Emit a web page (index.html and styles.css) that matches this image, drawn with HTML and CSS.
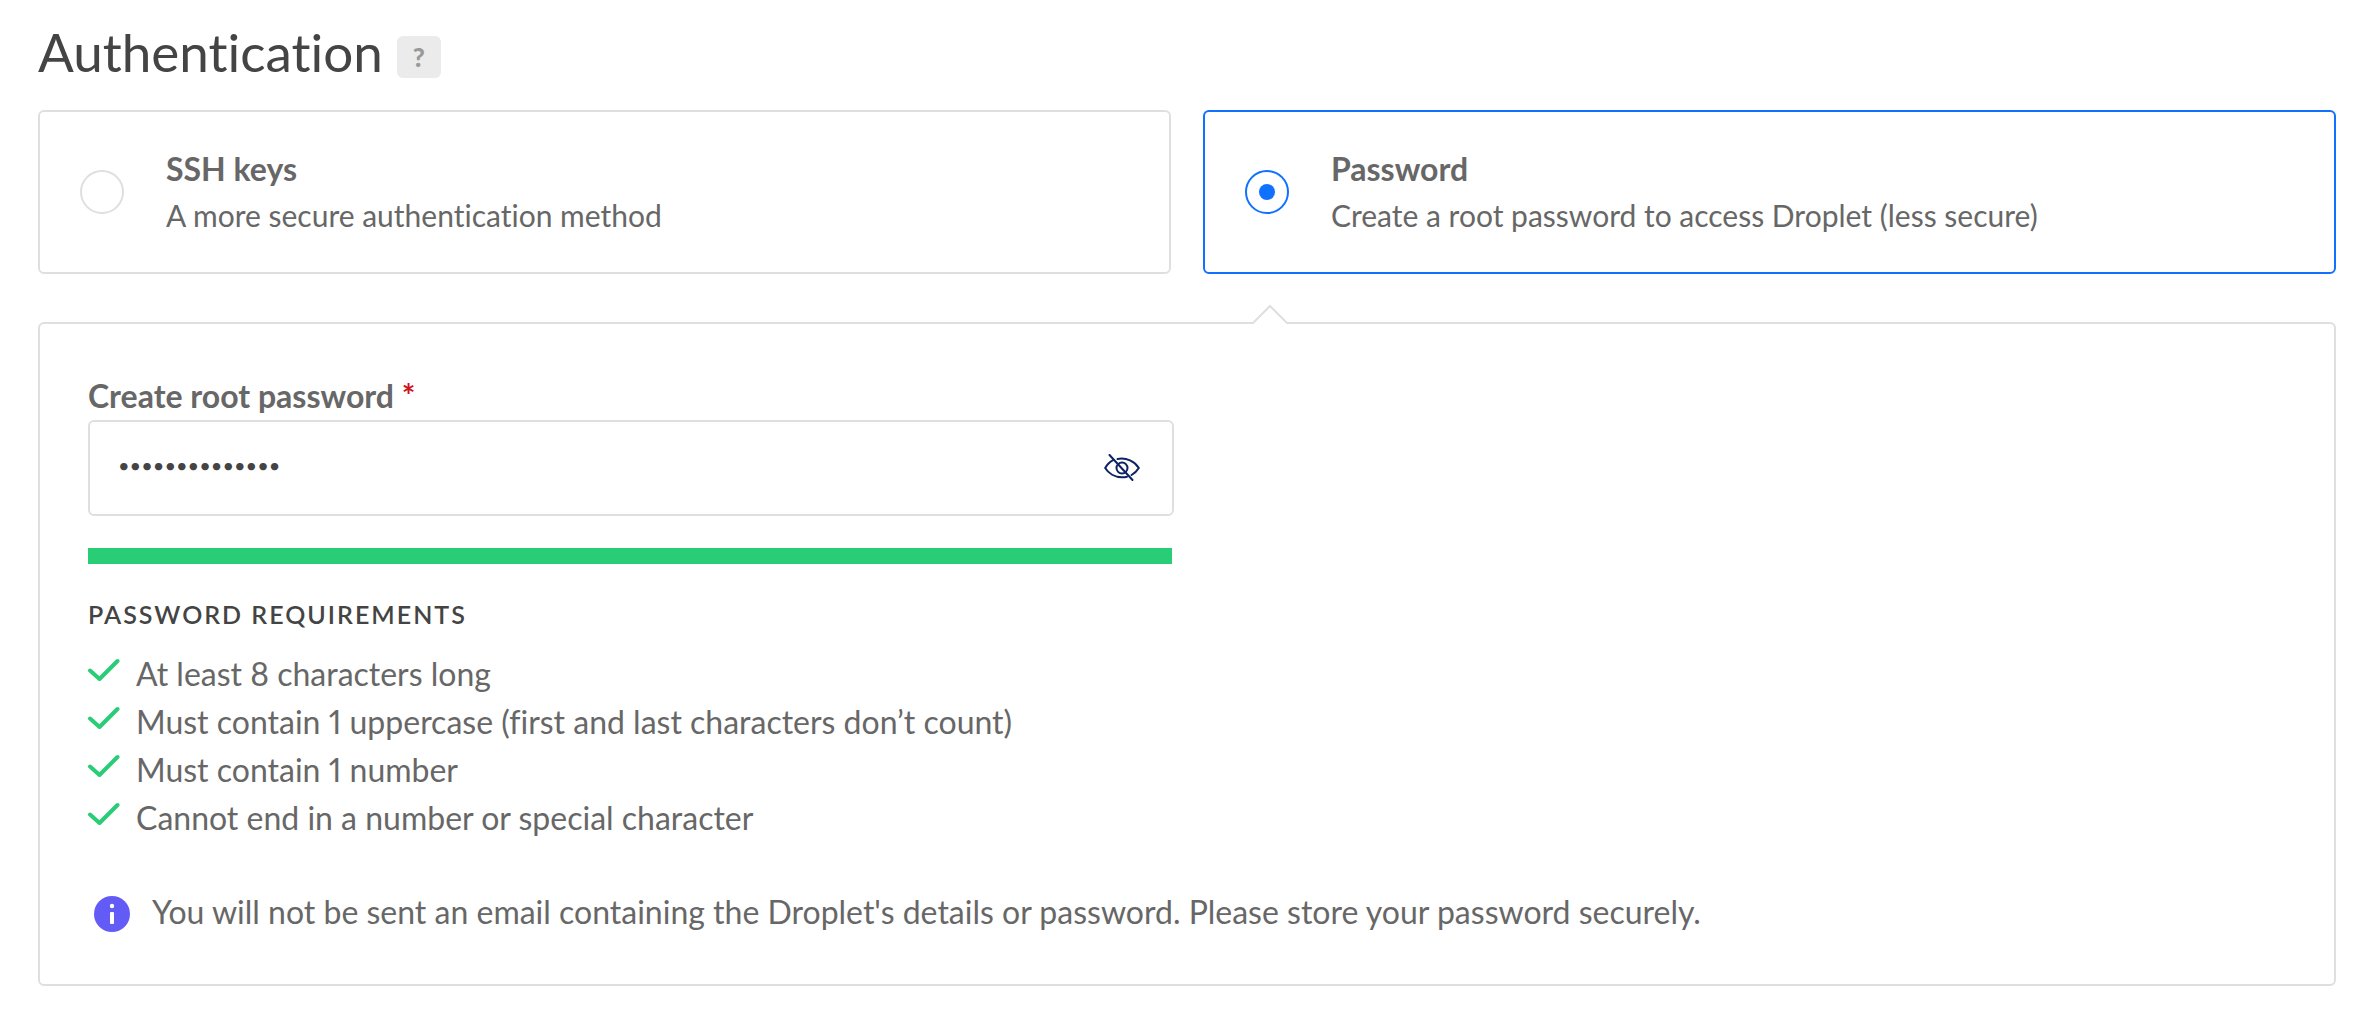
FILE: index.html
```html
<!DOCTYPE html>
<html lang="en">
<head>
<meta charset="utf-8">
<title>Authentication</title>
<link rel="stylesheet" href="styles.css">
</head>
<body>
<main class="auth">
  <header class="auth-header">
    <h1 class="auth-title">Authentication</h1>
    <button class="help" type="button">?</button>
  </header>

  <form class="auth-form">
    <div class="methods">
      <label class="method">
        <input class="radio" type="radio" name="method">
        <span class="method-text">
          <span class="method-name">SSH keys</span>
          <span class="method-note">A more secure authentication method</span>
        </span>
      </label>
      <label class="method">
        <input class="radio" type="radio" name="method" checked>
        <span class="method-text">
          <span class="method-name">Password</span>
          <span class="method-note">Create a root password to access Droplet (less secure)</span>
        </span>
      </label>
    </div>

    <section class="panel">
      <svg class="panel-caret" viewBox="0 0 36 20" aria-hidden="true"><path d="M0 20L18 1.500L36 20Z" fill="#fff"/><path d="M0 19H1L18 2L35 19H36" fill="none" stroke="#dfdfdf" stroke-width="2"/></svg>
      <div class="field">
        <label class="field-label" for="root-password">Create root password <span class="required">*</span></label>
        <div class="field-box">
          <input class="field-input" id="root-password" type="password" value="Tr4il-Harbor9x">
          <button class="reveal" type="button" aria-label="Show password">
            <svg class="reveal-icon" viewBox="0 0 36 28" fill="none" stroke="#0c2461" stroke-width="2" stroke-linecap="round" aria-hidden="true">
              <path d="M5.500 1L28.500 26"/>
              <path d="M9.500 5.800C6 7.700 2.800 10.800 1.200 14C4.500 19.500 11 23.300 18 23.300C19.800 23.300 21.500 23.100 23 22.700"/>
              <path d="M13.500 5C22.500 3.300 30.800 7.500 34.800 14C33 17 30.500 19.300 27.500 21"/>
              <circle cx="18" cy="14" r="5.500"/>
            </svg>
          </button>
        </div>
        <div class="strength"></div>
      </div>

      <h2 class="rules-title">PASSWORD REQUIREMENTS</h2>
      <ul class="rules">
        <li class="rule"><svg class="check" viewBox="0 0 32 24" aria-hidden="true"><path d="M2 12.500L11.500 21L29.500 3"/></svg>At least 8 characters long</li>
        <li class="rule"><svg class="check" viewBox="0 0 32 24" aria-hidden="true"><path d="M2 12.500L11.500 21L29.500 3"/></svg>Must contain 1 uppercase (first and last characters don’t count)</li>
        <li class="rule"><svg class="check" viewBox="0 0 32 24" aria-hidden="true"><path d="M2 12.500L11.500 21L29.500 3"/></svg>Must contain 1 number</li>
        <li class="rule"><svg class="check" viewBox="0 0 32 24" aria-hidden="true"><path d="M2 12.500L11.500 21L29.500 3"/></svg>Cannot end in a number or special character</li>
      </ul>

      <p class="notice">
        <svg class="notice-icon" viewBox="0 0 36 36" aria-hidden="true"><circle cx="18" cy="18" r="18" fill="#635bf5"/><circle cx="18" cy="10" r="2.200" fill="#fff"/><rect x="16" y="16" width="4" height="12" rx="1" fill="#fff"/></svg>
        <span>You will not be sent an email containing the Droplet's details or password. Please store your password securely.</span>
      </p>
    </section>
  </form>
</main>
</body>
</html>
```
FILE: styles.css
```css
* {
  box-sizing: border-box;
}

body {
  margin: 0;
  background: #fff;
  color: #676767;
  font-family: Lato, "Open Sans", sans-serif;
  font-size: 32px;
  font-variant-ligatures: none;
  font-variant-numeric: proportional-nums;
  line-height: 48px;
}

.auth {
  padding: 20px 30px 48px 38px;
}

.auth-header {
  display: flex;
  align-items: center;
  gap: 14px;
  margin-bottom: 26px;
}

.auth-title {
  margin: 0;
  color: #444;
  font-size: 53px;
  font-weight: 400;
  line-height: 64px;
}

.help {
  width: 44px;
  height: 42px;
  margin-top: 10px;
  padding: 0;
  border: 0;
  border-radius: 6px;
  background: #ebebeb;
  color: #999;
  font: 900 26px/42px Lato, sans-serif;
}

.methods {
  display: grid;
  grid-template-columns: 1fr 1fr;
  gap: 32px;
  margin-bottom: 48px;
}

.method {
  display: flex;
  align-items: center;
  gap: 42px;
  padding: 34px 40px;
  border: 2px solid #dfdfdf;
  border-radius: 6px;
}

.method:has(:checked) {
  border-color: #1070ff;
}

.radio {
  appearance: none;
  display: grid;
  place-items: center;
  flex: none;
  width: 44px;
  height: 44px;
  margin: 0;
  border: 2px solid #dfdfdf;
  border-radius: 50%;
}

.radio:checked {
  border-color: #1070ff;
}

.radio:checked::before {
  content: "";
  width: 16px;
  height: 16px;
  border-radius: 50%;
  background: #1070ff;
}

.method-text {
  display: grid;
  line-height: 46px;
}

.method-name {
  font-size: 32px;
  font-weight: 700;
}

.method-note {
  font-size: 30px;
}

.panel {
  position: relative;
  padding: 48px;
  border: 2px solid #dfdfdf;
  border-radius: 6px;
}

.panel-caret {
  position: absolute;
  top: -20px;
  left: calc(50% + 65px);
  width: 36px;
  height: 20px;
}

.field {
  width: calc(50% - 13px);
}

.field-label {
  display: block;
  font-weight: 700;
}

.required {
  color: #d0121b;
}

.field-box {
  display: flex;
  align-items: center;
  height: 96px;
  padding: 0 32px 0 28px;
  border: 2px solid #dfdfdf;
  border-radius: 6px;
}

.field-input {
  flex: 1;
  min-width: 0;
  padding: 0 0 6px;
  border: 0;
  outline: 0;
  background: none;
  color: #444;
  font: 400 20px/48px Lato, sans-serif;
}

.reveal {
  display: flex;
  padding: 0;
  border: 0;
  background: none;
}

.reveal-icon {
  width: 36px;
  height: 28px;
}

.strength {
  height: 16px;
  margin: 32px 2px 0 0;
  background: #28cd75;
}

.rules-title {
  margin: 32px 0 18px;
  color: #444;
  font-size: 25px;
  font-weight: 600;
  letter-spacing: 2px;
  line-height: 36px;
}

.rules {
  margin: 0 0 46px;
  padding: 0;
  list-style: none;
}

.rule {
  display: flex;
  gap: 16px;
}

.check {
  width: 32px;
  height: 24px;
  margin-top: 8px;
  fill: none;
  stroke: #28cd75;
  stroke-width: 4;
  stroke-linecap: round;
  stroke-linejoin: round;
}

.notice {
  display: flex;
  gap: 22px;
  margin: 0;
  padding-left: 6px;
}

.notice-icon {
  flex: none;
  width: 36px;
  height: 36px;
  margin-top: 8px;
}
```
